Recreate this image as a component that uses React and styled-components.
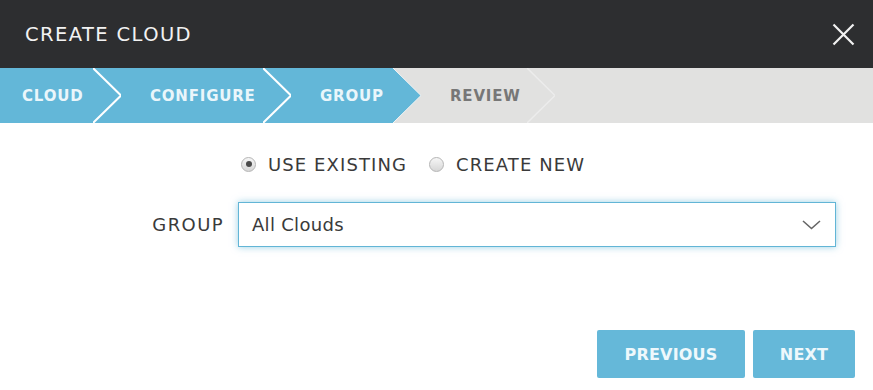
import styled, { createGlobalStyle } from "styled-components"

const Global = createGlobalStyle`
  html, body {
    margin: 0;
    padding: 0;
    background: #fff;
  }
  * {
    box-sizing: border-box;
  }
`

const Modal = styled.div`
  width: 873px;
  height: 390px;
  overflow: hidden;
  display: flex;
  flex-direction: column;
  font-family: "DejaVu Sans", Verdana, sans-serif;
  background: #fff;
`
const Header = styled.div`
  height: 68px;
  background: #2d2e30;
  display: flex;
  align-items: center;
  justify-content: space-between;
  padding: 0 18px 0 25px;
`
const Title = styled.h1`
  margin: 0;
  font-size: 19.5px;
  font-weight: normal;
  letter-spacing: 1.4px;
  color: #f2f2f2;
`
const Close = styled.button`
  border: 0;
  background: none;
  padding: 0;
  width: 23px;
  height: 23px;
  display: flex;
  cursor: pointer;
`
const Steps = styled.div`
  height: 55px;
  display: flex;
  background: #e1e1e0;
`
const Step = styled.div`
  width: ${props => props.w}px;
  padding-left: ${props => props.first ? 22 : 29}px;
  background: ${props => props.bg};
  color: ${props => props.fg};
  display: flex;
  align-items: center;
  font-size: 15px;
  font-weight: bold;
  letter-spacing: 0.8px;
  white-space: nowrap;
`
const Sep = styled.svg`
  display: block;
  flex: none;
  width: 28px;
  height: 55px;
  background: ${props => props.right};
`
const Body = styled.div`
  flex: 1;
  display: grid;
  grid-template-columns: 238px 598px;
  grid-auto-rows: min-content;
  padding-top: 29px;
  row-gap: 26px;
`
const RadioRow = styled.div`
  grid-column: 2;
  height: 24px;
  display: flex;
  align-items: center;
  padding-left: 3px;
`
const RadioLabel = styled.label`
  display: flex;
  align-items: center;
  margin-right: 22px;
  font-size: 18px;
  letter-spacing: 1.1px;
  color: #3a3a3a;
  cursor: pointer;
`
const RadioDot = styled.span`
  width: 15px;
  height: 15px;
  border-radius: 50%;
  border: 1px solid #b5b5b5;
  background: linear-gradient(#f6f6f6, #d6d6d6);
  margin-right: 12px;
  display: flex;
  align-items: center;
  justify-content: center;
  &::after {
    content: "";
    width: 6px;
    height: 6px;
    border-radius: 50%;
    background: ${props => props.checked ? "#4a4a4a" : "transparent"};
  }
`
const FieldLabel = styled.div`
  font-size: 18px;
  color: #3a3a3a;
  letter-spacing: 1.4px;
  text-align: right;
  padding-right: 14px;
  align-self: center;
`
const Select = styled.div`
  height: 45px;
  border: 1px solid #62b5d6;
  box-shadow: 0 0 7px rgba(98, 181, 214, 0.65);
  display: flex;
  align-items: center;
  justify-content: space-between;
  padding: 0 14px 0 13px;
  font-size: 18px;
  letter-spacing: 0.3px;
  color: #3a3a3a;
  background: #fff;
`
const Footer = styled.div`
  display: flex;
  justify-content: flex-end;
  gap: 8px;
  padding: 0 18px 12px 0;
`
const Button = styled.button`
  width: ${props => props.w}px;
  height: 48px;
  border: 0;
  border-radius: 2px;
  background: #65b8d9;
  color: #eef8fc;
  font-family: "DejaVu Sans", Verdana, sans-serif;
  font-size: 16px;
  font-weight: bold;
  letter-spacing: 0.2px;
  cursor: pointer;
`

const BLUE = "#63b7d8"
const GRAY = "#e1e1e0"

const App = () => {
  return (
    <Modal>
      <Global/>
      <Header>
        <Title>CREATE CLOUD</Title>
        <Close>
          <svg width="23" height="23" viewBox="0 0 23 23">
            <path d="M1.5 1.5L21.5 21.5M21.5 1.5L1.5 21.5" stroke="#f2f2f2" strokeWidth="2.2"/>
          </svg>
        </Close>
      </Header>
      <Steps>
        <Step first w={93} bg={BLUE} fg="#eaf6fb">CLOUD</Step>
        <Sep right={BLUE} viewBox="0 0 28 55">
          <polyline points="0,0 28,27.5 0,55" fill="none" stroke="#fff" strokeWidth="2"/>
        </Sep>
        <Step w={142} bg={BLUE} fg="#eaf6fb">CONFIGURE</Step>
        <Sep right={BLUE} viewBox="0 0 28 55">
          <polyline points="0,0 28,27.5 0,55" fill="none" stroke="#fff" strokeWidth="2"/>
        </Sep>
        <Step w={102} bg={BLUE} fg="#eaf6fb">GROUP</Step>
        <Sep right={GRAY} viewBox="0 0 28 55">
          <polygon points="0,0 28,27.5 0,55" fill={BLUE}/>
          <polyline points="0,0 28,27.5 0,55" fill="none" stroke="#f4f4f4" strokeWidth="1"/>
        </Sep>
        <Step w={106} bg={GRAY} fg="#777">REVIEW</Step>
        <Sep right={GRAY} viewBox="0 0 28 55">
          <polyline points="0,0 28,27.5 0,55" fill="none" stroke="#ececec" strokeWidth="1.5"/>
        </Sep>
      </Steps>
      <Body>
        <RadioRow>
          <RadioLabel><RadioDot checked/>USE EXISTING</RadioLabel>
          <RadioLabel><RadioDot/>CREATE NEW</RadioLabel>
        </RadioRow>
        <FieldLabel>GROUP</FieldLabel>
        <Select>
          All Clouds
          <svg width="19" height="10" viewBox="0 0 19 10">
            <polyline points="1,1 9.5,8.5 18,1" fill="none" stroke="#666" strokeWidth="1.6"/>
          </svg>
        </Select>
      </Body>
      <Footer>
        <Button w={148}>PREVIOUS</Button>
        <Button w={102}>NEXT</Button>
      </Footer>
    </Modal>
  )
}

export default App
